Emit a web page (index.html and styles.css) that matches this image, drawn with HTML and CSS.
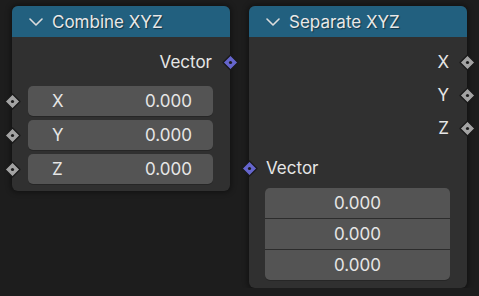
FILE: index.html
```html
<!DOCTYPE html>
<html lang="en">
  <head>
    <meta charset="UTF-8" />
    <title>Nodes – Combine / Separate XYZ</title>
    <link rel="stylesheet" href="styles.css">
  </head>
  <body>
    <div class="canvas">
      <!-- Combine XYZ -->
      <div class="node combine">
        <div class="header">
          <svg class="chev" width="14" height="8" viewBox="0 0 14 8"><path d="M1 1 L7 7 L13 1" fill="none" stroke="#dcdcdc" stroke-width="1.6" stroke-linecap="round" stroke-linejoin="round"/></svg>
          <span>Combine XYZ</span>
        </div>
        <div class="body">
          <div class="row out"><span>Vector</span>
            <svg class="socket vec" width="17" height="17" viewBox="0 0 17 17"><polygon points="8.5,1 16,8.5 8.5,16 1,8.5"/><circle cx="8.5" cy="8.5" r="1.6"/></svg>
          </div>
          <div class="frow">
            <svg class="socket" width="17" height="17" viewBox="0 0 17 17"><polygon points="8.5,1 16,8.5 8.5,16 1,8.5"/><circle cx="8.5" cy="8.5" r="1.6"/></svg>
            <div class="field"><span>X</span><span>0.000</span></div>
          </div>
          <div class="frow">
            <svg class="socket" width="17" height="17" viewBox="0 0 17 17"><polygon points="8.5,1 16,8.5 8.5,16 1,8.5"/><circle cx="8.5" cy="8.5" r="1.6"/></svg>
            <div class="field"><span>Y</span><span>0.000</span></div>
          </div>
          <div class="frow">
            <svg class="socket" width="17" height="17" viewBox="0 0 17 17"><polygon points="8.5,1 16,8.5 8.5,16 1,8.5"/><circle cx="8.5" cy="8.5" r="1.6"/></svg>
            <div class="field"><span>Z</span><span>0.000</span></div>
          </div>
        </div>
      </div>

      <!-- Separate XYZ -->
      <div class="node separate">
        <div class="header">
          <svg class="chev" width="14" height="8" viewBox="0 0 14 8"><path d="M1 1 L7 7 L13 1" fill="none" stroke="#dcdcdc" stroke-width="1.6" stroke-linecap="round" stroke-linejoin="round"/></svg>
          <span>Separate XYZ</span>
        </div>
        <div class="body">
          <div class="row out"><span>X</span>
            <svg class="socket" width="17" height="17" viewBox="0 0 17 17"><polygon points="8.5,1 16,8.5 8.5,16 1,8.5"/><circle cx="8.5" cy="8.5" r="1.6"/></svg>
          </div>
          <div class="row out"><span>Y</span>
            <svg class="socket" width="17" height="17" viewBox="0 0 17 17"><polygon points="8.5,1 16,8.5 8.5,16 1,8.5"/><circle cx="8.5" cy="8.5" r="1.6"/></svg>
          </div>
          <div class="row out"><span>Z</span>
            <svg class="socket" width="17" height="17" viewBox="0 0 17 17"><polygon points="8.5,1 16,8.5 8.5,16 1,8.5"/><circle cx="8.5" cy="8.5" r="1.6"/></svg>
          </div>
          <div class="row in">
            <svg class="socket vec" width="17" height="17" viewBox="0 0 17 17"><polygon points="8.5,1 16,8.5 8.5,16 1,8.5"/><circle cx="8.5" cy="8.5" r="1.6"/></svg>
            <span>Vector</span>
          </div>
          <div class="frow">
            <div class="vfield">
              <div class="vcell">0.000</div>
              <div class="vcell">0.000</div>
              <div class="vcell">0.000</div>
            </div>
          </div>
        </div>
      </div>
    </div>
  </body>
</html>
```

FILE: styles.css
```css
body {
  margin: 0;
  background: #1d1d1d;
  font-family: Inter, "Noto Sans", sans-serif;
  font-size: 17px;
  color: #e6e6e6;
}
.canvas {
  display: flex;
  align-items: flex-start;
  gap: 19px;
  padding: 6px 0 0 12px;
}
.node {
  width: 218px;
  background: #303030;
  border-radius: 6px;
  box-shadow: 0 0 5px 2px rgba(0, 0, 0, 0.35);
}
.header {
  height: 31px;
  display: flex;
  align-items: center;
  background: #22607f;
  border-radius: 6px 6px 0 0;
  padding-left: 17px;
  color: #e8e8e8;
  text-shadow: 1px 1px 1px rgba(0, 0, 0, 0.45);
}
.chev {
  margin-right: 9px;
  margin-top: 1px;
}
.body {
  padding: 8px 0 7px;
}
.separate .body {
  padding-bottom: 8px;
}
.row {
  position: relative;
  height: 33px;
  display: flex;
  align-items: center;
}
.row.out {
  justify-content: flex-end;
  padding-right: 18px;
}
.row.in {
  margin-top: 7px;
  padding-left: 17px;
}
.frow {
  position: relative;
  padding: 0 17px 0 16px;
  margin-top: 4px;
}
.row + .frow {
  margin-top: 8px;
}
.row.in + .frow {
  margin-top: 4px;
}
.field {
  height: 30px;
  display: flex;
  align-items: center;
  justify-content: space-between;
  padding: 0 21px 0 24px;
  background: #545454;
  border-radius: 5px;
  box-shadow: 0 1px 0 #262626;
}
.vfield {
  background: #545454;
  border-radius: 5px;
  overflow: hidden;
  box-shadow: 0 1px 0 #262626;
}
.vcell {
  height: 30px;
  display: flex;
  align-items: center;
  justify-content: center;
}
.vcell + .vcell {
  border-top: 1px solid #2c2c2c;
}

/* sockets: little diamonds sitting on the node edge */
.socket {
  position: absolute;
  top: 50%;
  margin-top: -8px;
}
.socket polygon {
  fill: #a3a3a3;
  stroke: #1a1a1a;
  stroke-width: 1.3;
  stroke-linejoin: round;
}
.socket circle {
  fill: #1c1c1c;
}
.socket.vec polygon {
  fill: #6565cc;
}
.row.out .socket {
  right: -8.5px;
}
.row.in .socket,
.frow .socket {
  left: -8.5px;
}
```
